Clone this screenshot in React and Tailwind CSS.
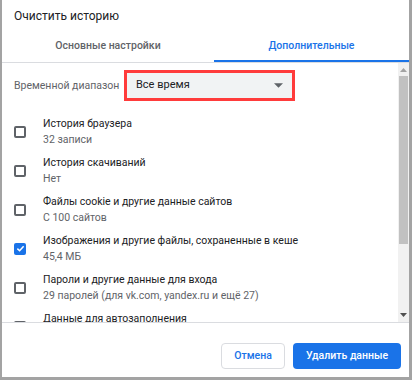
import React from 'react';

const items = [
  { title: 'История браузера', sub: '32 записи', checked: false },
  { title: 'История скачиваний', sub: 'Нет', checked: false },
  { title: 'Файлы cookie и другие данные сайтов', sub: 'С 100 сайтов', checked: false },
  { title: 'Изображения и другие файлы, сохраненные в кеше', sub: '45,4 МБ', checked: true },
  { title: 'Пароли и другие данные для входа', sub: '29 паролей (для vk.com, yandex.ru и ещё 27)', checked: false },
  { title: 'Данные для автозаполнения', sub: '', checked: false },
];

const Checkbox = ({ checked }) =>
  checked ? (
    <div className="w-[12px] h-[12px] rounded-[2px] bg-[#1a73e8] flex items-center justify-center">
      <svg width="9" height="9" viewBox="0 0 10 10">
        <path d="M1.5 5.2 L4 7.5 L8.5 2.5" fill="none" stroke="white" strokeWidth="1.7" />
      </svg>
    </div>
  ) : (
    <div className="w-[12px] h-[12px] rounded-[2px] border-2 border-[#5f6368]" />
  );

const App = () => {
  return (
    <div className="w-[412px] h-[380px] bg-white border-l-2 border-r-[3px] border-b-[3px] border-[#a3a3a3] flex flex-col font-['Roboto',sans-serif] overflow-hidden">
      <div className="h-[30px] pl-[12px] pt-[9px] text-[12px] leading-[15px] text-[#202124]">
        Очистить историю
      </div>
      <div className="flex h-[33px] border-b border-[#dadce0]">
        <div className="w-[212px] flex items-center justify-center text-[10.5px] font-medium text-[#5f6368]">
          Основные настройки
        </div>
        <div className="flex-1 flex items-center justify-center text-[10.5px] font-medium text-[#1a73e8] border-b-2 border-[#1a73e8] pt-[2px]">
          Дополнительные
        </div>
      </div>
      <div className="flex flex-1 min-h-0">
        <div className="flex-1 overflow-hidden pl-[12px]">
          <div className="flex items-center h-[31px] mt-[7px]">
            <span className="text-[10.5px] text-[#5f6368] w-[110px] whitespace-nowrap">Временной диапазон</span>
            <div className="w-[171px] h-[31px] border-[3px] border-[#ff3b3b] bg-[#f1f3f4] flex items-center justify-between pl-[9px] pr-[9px]">
              <span className="text-[11px] text-[#202124]">Все время</span>
              <svg width="9" height="5" viewBox="0 0 10 5">
                <path d="M0 0 L10 0 L5 5 Z" fill="#5f6368" />
              </svg>
            </div>
          </div>
          <div className="mt-[11px]">
            {items.map((it) => (
              <div key={it.title} className="flex items-center h-[39px]">
                <div className="w-[29px] flex">
                  <Checkbox checked={it.checked} />
                </div>
                <div className="flex flex-col">
                  <span className="text-[10.5px] leading-[16px] text-[#202124] whitespace-nowrap">{it.title}</span>
                  <span className="text-[10.5px] leading-[16px] text-[#5f6368] whitespace-nowrap">{it.sub || '\u00a0'}</span>
                </div>
              </div>
            ))}
          </div>
        </div>
        <div className="w-[11px] bg-[#f1f1f1] flex flex-col items-center">
          <svg width="7" height="4" viewBox="0 0 7 4" className="mt-[5px]">
            <path d="M0 4 L7 4 L3.5 0 Z" fill="#a3a3a3" />
          </svg>
          <div className="w-[9px] h-[168px] bg-[#c1c1c1] mt-[4px]" />
          <div className="flex-1" />
          <svg width="7" height="4" viewBox="0 0 7 4" className="mb-[5px]">
            <path d="M0 0 L7 0 L3.5 4 Z" fill="#505050" />
          </svg>
        </div>
      </div>
      <div className="h-[55px] border-t border-[#dadce0] flex items-start justify-end gap-[8px] pr-[8px] pt-[20px]">
        <button className="w-[64px] h-[26px] rounded-[4px] border border-[#dadce0] text-[10.5px] font-medium text-[#1a73e8]">
          Отмена
        </button>
        <button className="w-[108px] h-[26px] rounded-[4px] bg-[#1a73e8] text-[10.5px] font-medium text-white">
          Удалить данные
        </button>
      </div>
    </div>
  );
};

export default App;
